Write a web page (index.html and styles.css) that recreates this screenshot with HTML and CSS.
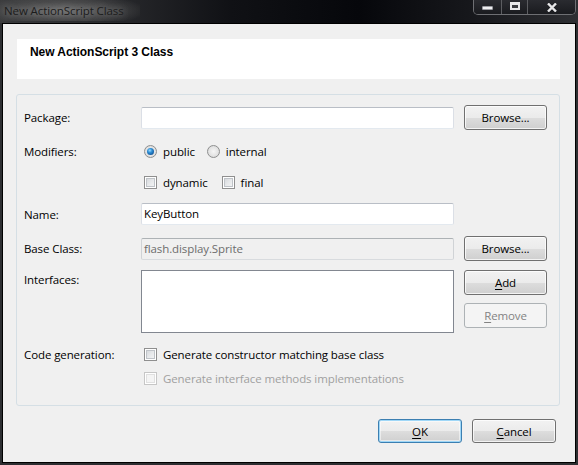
FILE: index.html
```html
<!DOCTYPE html>
<html>
<head>
<meta charset="utf-8">
<link rel="stylesheet" href="styles.css">
</head>
<body>
<div class="window">
  <div class="titlebar">
    <span class="title">New ActionScript Class</span>
    <div class="controls">
      <div class="ctl ctl-min"><span class="min-glyph"></span></div>
      <div class="ctl ctl-max"><span class="max-glyph"></span></div>
      <div class="ctl ctl-close">
        <svg width="10" height="9" viewBox="0 0 10 9"><path d="M1 0.5 L9 8.5 M9 0.5 L1 8.5" stroke="#e8e8ea" stroke-width="2.4" fill="none"/></svg>
      </div>
    </div>
  </div>
  <div class="client">
    <div class="banner"><span class="banner-title">New ActionScript 3 Class</span></div>
    <div class="group">
      <div class="row row-pkg">
        <span class="lbl">Package:</span>
        <div class="field"></div>
        <button class="btn">Browse...</button>
      </div>
      <div class="row row-mod">
        <span class="lbl">Modifiers:</span>
        <div class="opts">
          <span class="opt"><span class="radio checked"></span>public</span>
          <span class="opt"><span class="radio"></span>internal</span>
        </div>
      </div>
      <div class="row row-mod2">
        <span class="lbl"></span>
        <div class="opts opts-wide">
          <span class="opt"><span class="check"></span>dynamic</span>
          <span class="opt"><span class="check"></span>final</span>
        </div>
      </div>
      <div class="row row-name">
        <span class="lbl">Name:</span>
        <div class="field">KeyButton</div>
      </div>
      <div class="row row-base">
        <span class="lbl">Base Class:</span>
        <div class="field field-disabled">flash.display.Sprite</div>
        <button class="btn">Browse...</button>
      </div>
      <div class="row row-ifc">
        <span class="lbl lbl-top">Interfaces:</span>
        <div class="list"></div>
        <div class="btn-stack">
          <button class="btn"><u>A</u>dd</button>
          <button class="btn" disabled><u>R</u>emove</button>
        </div>
      </div>
      <div class="row row-gen">
        <span class="lbl">Code generation:</span>
        <div class="opts"><span class="opt"><span class="check"></span>Generate constructor matching base class</span></div>
      </div>
      <div class="row row-gen2">
        <span class="lbl"></span>
        <div class="opts"><span class="opt opt-disabled"><span class="check check-disabled"></span>Generate interface methods implementations</span></div>
      </div>
    </div>
    <div class="actions">
      <button class="btn btn-action btn-default"><u>O</u>K</button>
      <button class="btn btn-action"><u>C</u>ancel</button>
    </div>
  </div>
</div>
</body>
</html>
```
FILE: styles.css
```css
html, body {
  margin: 0;
  padding: 0;
}
body {
  width: 578px;
  height: 465px;
  overflow: hidden;
  background: #2d2e31;
  font-family: "Open Sans", "Liberation Sans", sans-serif;
  font-size: 11.5px;
  letter-spacing: -0.1px;
  color: #000;
}
.window {
  display: flex;
  flex-direction: column;
  height: 465px;
}
.titlebar {
  height: 23px;
  flex: none;
  display: flex;
  justify-content: space-between;
  align-items: flex-start;
  background: linear-gradient(90deg, #3a3b3d 0%, #2a2b2e 18%, #101115 40%, #06070b 62%, #17181c 82%, #2e2f33 100%);
}
.title {
  padding: 0 16px 0 4px;
  height: 21px;
  line-height: 21px;
  color: #1c1c1c;
  background: radial-gradient(ellipse 60% 80% at 45% 50%, rgba(120,120,120,0.85) 0%, rgba(90,90,90,0.6) 55%, rgba(60,60,60,0) 100%);
  text-shadow: 0 0 6px rgba(170,170,170,0.7);
}
.controls {
  display: flex;
  margin-right: 2px;
  height: 14px;
  border: 1px solid #6e6f73;
  border-top: none;
  border-radius: 0 0 5px 5px;
  overflow: hidden;
  background: #1f2024;
}
.ctl {
  height: 14px;
  display: flex;
  align-items: center;
  justify-content: center;
  box-sizing: border-box;
  background: linear-gradient(#2a2b30, #1a1b1f);
}
.ctl-min { width: 28px; border-right: 1px solid #5c5d61; }
.ctl-max { width: 26px; border-right: 1px solid #5c5d61; }
.ctl-close { width: 47px; }
.min-glyph {
  width: 11px;
  height: 4px;
  margin-top: 1px;
  background: #eeeef0;
  border: 1px solid #9a9ba0;
  box-sizing: border-box;
  border-radius: 1px;
}
.max-glyph {
  width: 10px;
  height: 8px;
  margin-top: -3px;
  box-sizing: border-box;
  border: 2px solid #e8e8ea;
  border-top-width: 3px;
  background: #3a3b40;
}
.client {
  flex: none;
  box-sizing: border-box;
  height: 440px;
  margin: 0 2px 0 2px;
  border: 1px solid #000;
  background: #f0f0f0;
  display: flex;
  flex-direction: column;
}
.banner {
  margin: 15px 15px 0 14px;
  height: 40px;
  background: #fff;
  padding: 6px 0 0 13px;
  box-sizing: border-box;
}
.banner-title {
  font-family: "Liberation Sans", Arial, sans-serif;
  font-weight: bold;
  font-size: 12px;
  letter-spacing: -0.05px;
  line-height: 14px;
  display: block;
}
.group {
  margin: 15px 15px 0 13px;
  border: 1px solid #d5dfe5;
  border-radius: 3px;
  padding: 10px 12px 15px 7px;
  display: flex;
  flex-direction: column;
}
.row {
  display: grid;
  grid-template-columns: 117px 313px 83px;
  column-gap: 0;
  align-items: center;
  height: 24px;
}
.row > .btn, .row > .btn-stack { margin-left: 10px; }
.row-pkg { height: 25px; }
.row-mod { margin-top: 9px; }
.row-mod2 { margin-top: 7px; }
.row-name { margin-top: 8px; }
.row-base { margin-top: 10px; height: 25px; }
.row-ifc { margin-top: 9px; height: 63px; align-items: start; }
.row-gen { margin-top: 9px; }
.lbl { white-space: nowrap; }
.lbl-top { margin-top: 2px; }
.field {
  box-sizing: border-box;
  height: 22px;
  border: 1px solid;
  border-color: #b9bec6 #dbdfe6 #e3e9ef #dbdfe6;
  border-radius: 2px;
  background: #fff;
  padding: 0 2px;
  line-height: 20px;
  white-space: nowrap;
}
.field-disabled {
  background: #f0f0f0;
  border-color: #adb2b5 #d0d3d6 #d8dbde #d0d3d6;
  color: #6d6d6d;
}
.list {
  box-sizing: border-box;
  height: 63px;
  border: 1px solid #828790;
  background: #fff;
}
.btn-stack {
  display: flex;
  flex-direction: column;
  gap: 8px;
}
.btn {
  box-sizing: border-box;
  width: 83px;
  height: 25px;
  padding: 0;
  font: inherit;
  letter-spacing: inherit;
  color: #000;
  border: 1px solid #707070;
  border-radius: 3px;
  background: linear-gradient(#f2f2f2 0%, #ebebeb 50%, #dddddd 51%, #cfcfcf 100%);
  box-shadow: inset 0 0 0 1px rgba(255,255,255,0.75);
  text-align: center;
  line-height: 22px;
}
.btn:disabled {
  border-color: #adb2b5;
  background: #f4f4f4;
  color: #838383;
  box-shadow: none;
}
.btn u { text-decoration: underline; text-underline-offset: 2px; }
.opts {
  display: flex;
  align-items: center;
  gap: 12px;
  padding-left: 3px;
  white-space: nowrap;
}
.opts-wide { gap: 14px; }
.opt {
  display: flex;
  align-items: center;
  gap: 6px;
}
.opt-disabled { color: #a0a0a0; }
.radio {
  width: 13px;
  height: 13px;
  box-sizing: border-box;
  border-radius: 50%;
  border: 1px solid #8e8f8f;
  background: radial-gradient(circle at 50% 50%, #f6f6f6 0%, #e2e2e2 60%, #cfcfcf 100%);
  display: flex;
  align-items: center;
  justify-content: center;
}
.radio.checked::after {
  content: "";
  width: 7px;
  height: 7px;
  border-radius: 50%;
  background: radial-gradient(circle at 40% 35%, #9edcff 0%, #2e8fd6 35%, #13589c 75%, #0c4078 100%);
}
.check {
  width: 13px;
  height: 13px;
  box-sizing: border-box;
  border: 1px solid #8f8f8f;
  background: linear-gradient(135deg, #cfd2d6 0%, #e6e8ea 50%, #f8f8f8 100%);
  box-shadow: inset 0 0 0 1px #fff, inset 0 0 0 2px #bfc3c8;
}
.check-disabled {
  border-color: #c6c6c6;
  background: #f4f4f4;
  box-shadow: inset 0 0 0 1px #fff, inset 0 0 0 2px #e0e0e0;
}
.actions {
  display: flex;
  justify-content: flex-end;
  gap: 10px;
  margin-top: 13px;
  padding-right: 19px;
}
.btn-action {
  width: 84px;
  height: 24px;
  line-height: 21px;
}
.btn-default {
  border-color: #3c7fb1;
  box-shadow: inset 0 0 0 1px #9fd7f7, inset 0 0 0 2px rgba(255,255,255,0.5);
}
```
